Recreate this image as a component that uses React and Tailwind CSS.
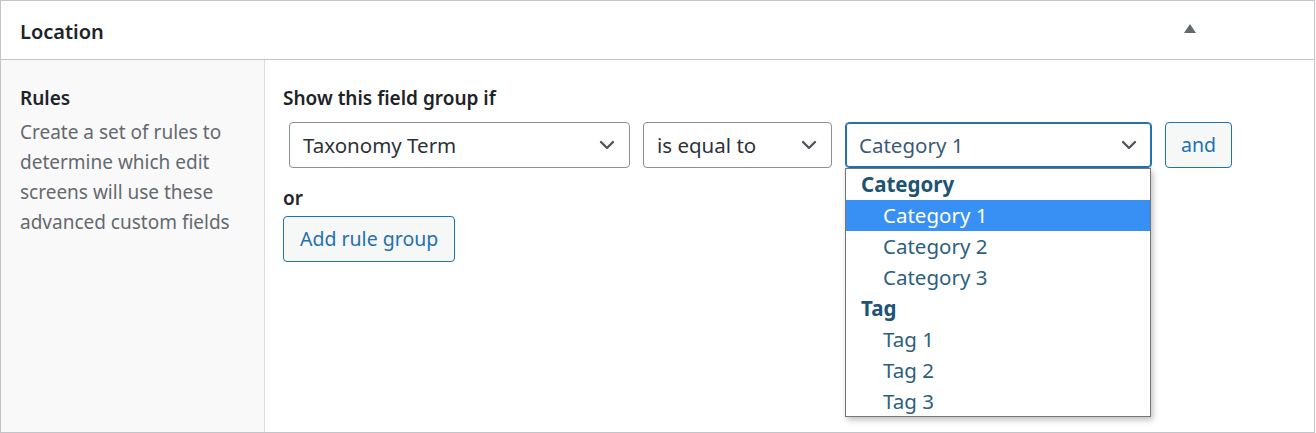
import React from "react";

const font = { fontFamily: '"Noto Sans", "Open Sans", sans-serif' };

const Chevron = () => (
  <svg width="16" height="10" viewBox="0 0 16 10" className="shrink-0">
    <path d="M2 2 L8 8 L14 2" fill="none" stroke="#50575e" strokeWidth="2.4" strokeLinecap="round" strokeLinejoin="round" />
  </svg>
);

const Select = ({ value, width, focused, children }) => (
  <div className={`relative ${width}`}>
    <div
      className={`h-[46px] rounded-[4px] bg-white flex items-center justify-between pl-[13px] pr-[14px] text-[20.5px] ${
        focused ? "border border-[#2271b1] shadow-[0_0_0_1px_#2271b1_inset]" : "border border-[#8c8f94]"
      }`}
    >
      <span className={focused ? "text-[#3c5a73]" : "text-[#2c3338]"}>{value}</span>
      <Chevron />
    </div>
    {children}
  </div>
);

const groups = [
  { label: "Category", items: ["Category 1", "Category 2", "Category 3"] },
  { label: "Tag", items: ["Tag 1", "Tag 2", "Tag 3"] },
];

const Dropdown = () => (
  <div className="absolute left-0 top-[46px] w-[306px] h-[249px] bg-white border border-[#767676] shadow-[2px_3px_6px_rgba(0,0,0,0.25)] z-10">
    {groups.map((g) => (
      <div key={g.label}>
        <div className="h-[31px] flex items-center pl-[15px] text-[20.5px] font-bold text-[#1d5373]">{g.label}</div>
        {g.items.map((it) => (
          <div
            key={it}
            className={`h-[31px] flex items-center pl-[37px] text-[20.5px] ${
              it === "Category 1" ? "bg-[#3990f4] text-white" : "text-[#2c5f7e]"
            }`}
          >
            {it}
          </div>
        ))}
      </div>
    ))}
  </div>
);

export default function App() {
  return (
    <div className="w-[1316px] h-[433px] bg-white" style={font}>
      <div className="w-[1315px] h-[433px] border border-[#c3c4c7] flex flex-col">
        {/* header */}
        <div className="h-[59px] shrink-0 border-b border-[#c3c4c7] flex items-center justify-between pl-[19px] pr-[117px] pt-[3px]">
          <h2 className="text-[20px] font-semibold text-[#1d2327]">Location</h2>
          <svg width="14" height="11" viewBox="0 0 14 11" className="-mt-[6px]">
            <path d="M7 1 L13 10 L1 10 Z" fill="#646970" />
          </svg>
        </div>

        {/* body */}
        <div className="flex flex-1">
          <div className="w-[264px] shrink-0 bg-[#f9f9f9] border-r border-[#dcdcde] pl-[19px] pr-3 pt-[23px]">
            <div className="text-[19px] font-semibold text-[#1d2327] leading-[30px]">Rules</div>
            <p className="text-[19px] text-[#646970] leading-[30px] mt-[4px]">
              Create a set of rules to determine which edit screens will use these advanced custom fields
            </p>
          </div>

          <div className="flex-1 pl-[18px] pt-[23px]">
            <div className="text-[19px] font-semibold text-[#1d2327] leading-[30px]">Show this field group if</div>
            <div className="flex items-start gap-[13px] mt-[9px] pl-[6px]">
              <Select value="Taxonomy Term" width="w-[341px]" />
              <Select value="is equal to" width="w-[189px]" />
              <Select value="Category 1" width="w-[307px]" focused>
                <Dropdown />
              </Select>
              <button className="h-[46px] px-[15px] rounded-[4px] border border-[#2271b1] bg-[#f6f7f7] text-[#2271b1] text-[19.5px]">
                and
              </button>
            </div>
            <div className="text-[19px] font-semibold text-[#1d2327] leading-[30px] mt-[15px]">or</div>
            <button className="mt-[3px] h-[46px] px-[16px] rounded-[4px] border border-[#2271b1] bg-[#f6f7f7] text-[#2271b1] text-[19.5px]">
              Add rule group
            </button>
          </div>
        </div>
      </div>
    </div>
  );
}
